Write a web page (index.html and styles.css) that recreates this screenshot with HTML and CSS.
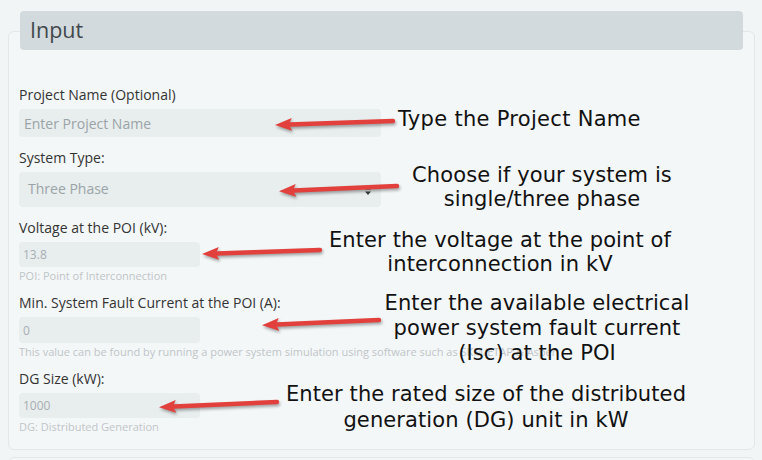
FILE: index.html
```html
<!DOCTYPE html>
<html lang="en">
<head>
    <meta charset="UTF-8">
    <meta name="viewport" content="width=device-width, initial-scale=1.0">
    <title>Input</title>
    <link rel="stylesheet" href="styles.css">
</head>
<body>
    <div class="page">
        <section class="panel">
            <h2 class="panel-heading">Input</h2>
            <form class="form">
                <div class="field">
                    <label class="label">Project Name (Optional)</label>
                    <input class="control control-wide control-name" type="text" placeholder="Enter Project Name">
                </div>
                <div class="field">
                    <label class="label">System Type:</label>
                    <div class="control control-wide control-select">
                        <span>Three Phase</span>
                        <svg class="caret" width="6" height="9" viewBox="0 0 6 9"><path d="M0 3.5 L3 0 L6 3.5 Z M0 5.5 L3 9 L6 5.5 Z"/></svg>
                    </div>
                </div>
                <div class="field">
                    <label class="label">Voltage at the POI (kV):</label>
                    <input class="control control-short" type="text" value="13.8">
                    <p class="hint">POI: Point of Interconnection</p>
                </div>
                <div class="field">
                    <label class="label">Min. System Fault Current at the POI (A):</label>
                    <input class="control control-short control-fault" type="text" value="0">
                    <p class="hint">This value can be found by running a power system simulation using software such as SKM/ETAP &amp; Aspen</p>
                </div>
                <div class="field">
                    <label class="label">DG Size (kW):</label>
                    <input class="control control-short" type="text" value="1000">
                    <p class="hint">DG: Distributed Generation</p>
                </div>
            </form>
        </section>
        <section class="panel panel-next"></section>

        <!-- callouts drawn over the form -->
        <svg class="arrows" width="762" height="460" viewBox="0 0 762 460">
            <defs>
                <marker id="head" markerUnits="userSpaceOnUse" markerWidth="20" markerHeight="16" refX="2" refY="8" orient="auto">
                    <path d="M0 1.5 L17 8 L0 14.5 L3 8 Z" fill="#e2403c"/>
                </marker>
            </defs>
            <line x1="393" y1="121" x2="290" y2="124.5" marker-end="url(#head)"/>
            <line x1="397" y1="186" x2="294" y2="190.5" marker-end="url(#head)"/>
            <line x1="320" y1="250" x2="217" y2="253.5" marker-end="url(#head)"/>
            <line x1="379" y1="320" x2="277" y2="324.5" marker-end="url(#head)"/>
            <line x1="277" y1="402" x2="174" y2="406.5" marker-end="url(#head)"/>
        </svg>
        <p class="note note-name">Type the Project Name</p>
        <p class="note note-type">Choose if your system is<br>single/three phase</p>
        <p class="note note-voltage">Enter the voltage at the point of<br>interconnection in kV</p>
        <p class="note note-fault">Enter the available electrical<br>power system fault current<br>(Isc) at the POI</p>
        <p class="note note-size">Enter the rated size of the distributed<br>generation (DG) unit in kW</p>
    </div>
</body>
</html>
```

FILE: styles.css
```css
/* Global Styles */
body {
    font-family: 'Open Sans', sans-serif;
    margin: 0;
    padding: 0;
    background-color: #f2f5f6;
    color: #333;
}

.page {
    position: relative;
    width: 762px;
    height: 460px;
    overflow: hidden;
}

/* Panel */
.panel {
    margin: 31px 7px 0 8px;
    border: 1px solid #e2e7e9;
    border-radius: 6px;
    background-color: #f4f7f8;
}

.panel-next {
    margin-top: 7px;
    height: 40px;
}

.panel-heading {
    margin: -21px 11px 0 11px;
    height: 39px;
    padding-left: 10px;
    line-height: 38px;
    font-size: 21.5px;
    font-weight: 400;
    color: #41484c;
    background-color: #d2dadd;
    border-radius: 4px;
}

/* Form */
.form {
    padding: 36px 10px 16px 10px;
}

.field {
    margin-bottom: 12px;
}

.field:last-child {
    margin-bottom: 0;
}

.label {
    display: block;
    font-size: 14px;
    line-height: 18px;
    color: #333;
    margin-bottom: 5px;
}

.control {
    display: block;
    box-sizing: border-box;
    border: none;
    border-radius: 4px;
    background-color: #e8eded;
    font-family: 'Open Sans', sans-serif;
    font-size: 12px;
    color: #a7afb3;
    padding: 0 0 0 4px;
    outline: none;
}

.control-wide {
    width: 362px;
}

.control-short {
    width: 181px;
    height: 25px;
}

.control-fault {
    height: 26px;
}

.control-name {
    height: 28px;
    font-size: 14px;
    padding-left: 5px;
}

.control-name::placeholder {
    color: #9aa4a8;
}

.control-select {
    display: flex;
    align-items: center;
    justify-content: space-between;
    height: 35px;
    padding: 0 10px 2px 9px;
    font-size: 14px;
    color: #9aa4a8;
}

.caret {
    fill: #3a3a3a;
    margin-top: 4px;
}

.hint {
    margin: 2px 0 0 0;
    font-size: 11px;
    line-height: 13px;
    color: #bfc5c8;
    white-space: nowrap;
}

/* Callouts */
.arrows {
    position: absolute;
    top: 0;
    left: 0;
    filter: drop-shadow(1px 2px 1.5px rgba(0, 0, 0, 0.35));
}

.arrows line {
    stroke: #e2403c;
    stroke-width: 4.5;
    stroke-linecap: round;
}

.note {
    position: absolute;
    margin: 0;
    width: 440px;
    font-family: 'DejaVu Sans', Verdana, sans-serif;
    font-size: 21px;
    line-height: 24px;
    letter-spacing: 0.1px;
    color: #111;
    text-align: center;
}

.note-name {
    left: 398px;
    top: 107px;
    width: auto;
    text-align: left;
    letter-spacing: 0.3px;
}

.note-type {
    left: 322px;
    top: 163px;
}

.note-voltage {
    left: 280px;
    top: 228px;
}

.note-fault {
    left: 317px;
    top: 291px;
    line-height: 25px;
}

.note-size {
    left: 266px;
    top: 381px;
    line-height: 26px;
}
```
